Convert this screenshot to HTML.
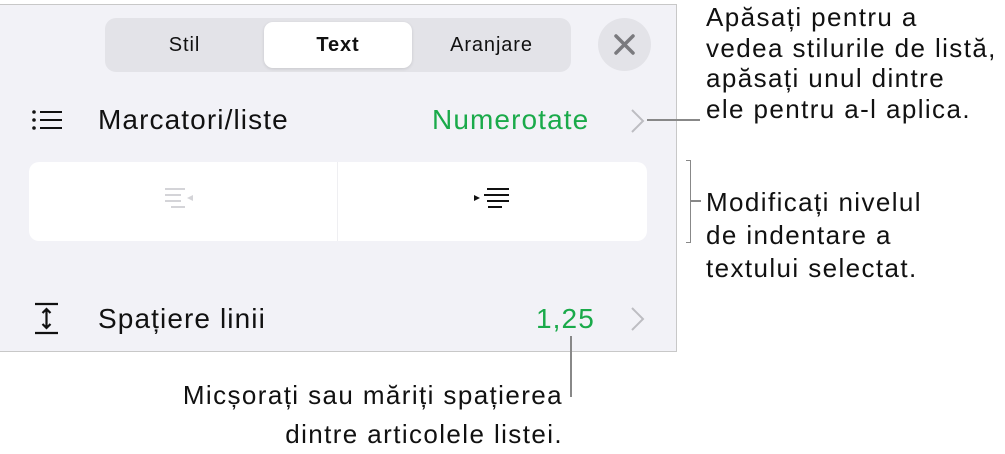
<!DOCTYPE html>
<html><head><meta charset="utf-8"><style>
body{margin:0;width:1005px;height:450px;background:#fff;position:relative;overflow:hidden;font-family:"Liberation Sans",sans-serif;}
.a{position:absolute;white-space:nowrap}
.panel{position:absolute;left:-1px;top:4px;width:676px;height:346px;background:#f2f2f7;border:1px solid #c8c8c8;}
.ann{font-size:26px;color:#111;line-height:30.5px;letter-spacing:1.4px}
.big{font-size:28px;letter-spacing:1.1px}
.tab{line-height:54px;text-align:center;font-size:20px;color:#111;letter-spacing:0.9px}
</style></head><body>
<div class="panel"></div>
<div class="a" style="left:105px;top:18px;width:466px;height:54px;background:#e3e3e8;border-radius:11px"></div>
<div class="a" style="left:264px;top:22px;width:148px;height:46px;background:#fff;border-radius:9px;box-shadow:0 1px 3px rgba(0,0,0,.12)"></div>
<div class="a tab" style="left:105px;top:18px;width:159px">Stil</div>
<div class="a tab" style="left:264px;top:18px;width:148px;font-weight:bold">Text</div>
<div class="a tab" style="left:412px;top:18px;width:159px">Aranjare</div>
<div class="a" style="left:598px;top:18px;width:53px;height:53px;border-radius:50%;background:#e3e3e8"></div>
<svg class="a" style="left:598px;top:18px" width="53" height="53"><path d="M18 18L35 35M35 18L18 35" stroke="#7a7a7e" stroke-width="3.5" stroke-linecap="round"/></svg>
<svg class="a" style="left:30px;top:108px" width="36" height="26"><g fill="#111"><circle cx="4" cy="4" r="1.8"/><circle cx="4" cy="12" r="1.8"/><circle cx="4" cy="20" r="1.8"/><rect x="10" y="3" width="22" height="2"/><rect x="10" y="11" width="22" height="2"/><rect x="10" y="19" width="22" height="2"/></g></svg>
<div class="a big" style="left:98px;top:104px;color:#111">Marcatori/liste</div>
<div class="a big" style="left:432px;top:104px;color:#1aaa4a">Numerotate</div>
<svg class="a" style="left:628px;top:108px" width="20" height="26"><path d="M4 2L15 13L4 24" fill="none" stroke="#bdbdc2" stroke-width="2"/></svg>
<div class="a" style="left:29px;top:162px;width:618px;height:79px;background:#fff;border-radius:10px"></div>
<div class="a" style="left:337px;top:162px;width:1px;height:79px;background:#efeff2"></div>
<svg class="a" style="left:163px;top:186px" width="40" height="32"><g fill="#d4d4d8"><rect x="2" y="2" width="20" height="2"/><rect x="2" y="8" width="16" height="2"/><rect x="2" y="14" width="16" height="2"/><rect x="8" y="20" width="14" height="2"/><path d="M30 9L24 12L30 15Z"/></g></svg>
<svg class="a" style="left:473px;top:186px" width="40" height="32"><g fill="#111"><path d="M1 9L7 12L1 15Z"/><rect x="14" y="2" width="22" height="2"/><rect x="11" y="8" width="25" height="2"/><rect x="14" y="14" width="22" height="2"/><rect x="15" y="20" width="14" height="2"/></g></svg>
<svg class="a" style="left:32px;top:302px" width="32" height="34"><g stroke="#111" stroke-width="2.2" fill="none"><path d="M3 2H26M3 31H26M14.5 7V26M10.5 11L14.5 7L18.5 11M10.5 22L14.5 26L18.5 22"/></g></svg>
<div class="a big" style="left:98px;top:303px;color:#111">Spațiere linii</div>
<div class="a big" style="left:536px;top:303px;color:#1aaa4a">1,25</div>
<svg class="a" style="left:628px;top:306px" width="20" height="26"><path d="M4 2L15 13L4 24" fill="none" stroke="#bdbdc2" stroke-width="2"/></svg>
<div class="a" style="left:647px;top:119px;width:53px;height:1.5px;background:#888"></div>
<div class="a" style="left:686px;top:160px;width:4px;height:81px;border:1.5px solid #888;border-left:none"></div>
<div class="a" style="left:691px;top:200px;width:10px;height:1.5px;background:#888"></div>
<div class="a" style="left:570px;top:336px;width:1.5px;height:61px;background:#888"></div>
<div class="a ann" style="left:706px;top:2px">Apăsați pentru a<br>vedea stilurile de listă,<br>apăsați unul dintre<br>ele pentru a-l aplica.</div>
<div class="a ann" style="left:706px;top:186px;line-height:33px">Modificați nivelul<br>de indentare a<br>textului selectat.</div>
<div class="a ann" style="right:442px;top:376px;text-align:right;line-height:39px">Micșorați sau măriți spațierea<br>dintre articolele listei.</div>
</body></html>
